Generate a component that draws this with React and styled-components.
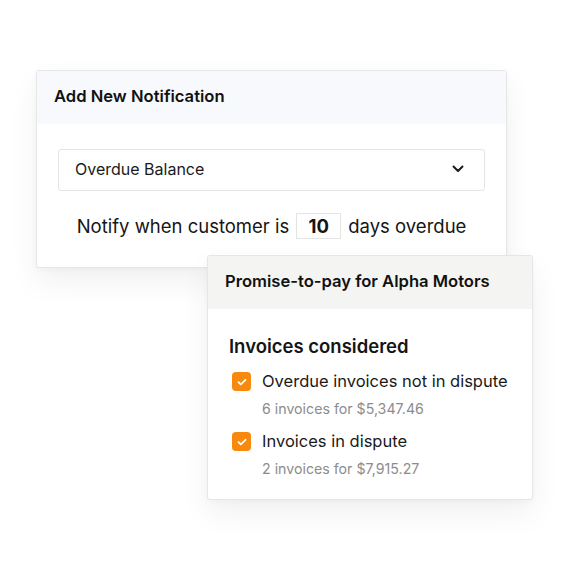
import React from "react";
import styled, { createGlobalStyle } from "styled-components";

const GlobalStyle = createGlobalStyle`
  body {
    margin: 0;
    background: #ffffff;
    font-family: "Inter", "Noto Sans", sans-serif;
    color: #111111;
  }
`;

const Stage = styled.main`
  width: 570px;
  height: 571px;
  padding-top: 70px;
  box-sizing: border-box;
  overflow: hidden;
`;

const Card = styled.section`
  position: relative;
  z-index: ${(p) => p.$z || 1};
  box-sizing: border-box;
  width: ${(p) => p.$width}px;
  height: ${(p) => p.$height}px;
  margin-left: ${(p) => p.$left}px;
  margin-top: ${(p) => p.$top || 0}px;
  background: #ffffff;
  border: 1px solid #e6e6e6;
  border-radius: 3px;
  box-shadow: 0 14px 30px rgba(0, 0, 0, 0.06), 0 2px 6px rgba(0, 0, 0, 0.03);
  overflow: hidden;
`;

const CardHeader = styled.header`
  height: ${(p) => p.$height}px;
  box-sizing: border-box;
  display: flex;
  align-items: center;
  padding: 0 0 3px ${(p) => p.$pad}px;
  background: ${(p) => p.$bg};
  font-size: 16.6px;
  font-weight: 600;
`;

const NotifyBody = styled.div`
  padding: 25px 21px 0;
  display: flex;
  flex-direction: column;
  align-items: stretch;
`;

const Select = styled.div`
  height: 42px;
  box-sizing: border-box;
  border: 1px solid #e4e4e4;
  border-radius: 3px;
  display: flex;
  align-items: center;
  justify-content: space-between;
  padding: 0 20px 2px 16px;
  font-size: 16px;
  color: #1a1a1a;
`;

const NotifyLine = styled.p`
  margin: 22px 0 0;
  display: flex;
  align-items: center;
  justify-content: center;
  gap: 7px;
  font-size: 18.5px;
  color: #151515;
`;

const DaysBox = styled.span`
  width: 45px;
  height: 26px;
  box-sizing: border-box;
  border: 1px solid #e4e4e4;
  display: inline-flex;
  align-items: center;
  justify-content: center;
  font-weight: 700;
`;

const PromiseBody = styled.div`
  padding: 24px 21px 0;
`;

const SectionTitle = styled.h2`
  margin: 0 0 10px;
  font-size: 18.5px;
  font-weight: 600;
  color: #151515;
  line-height: 26px;
`;

const Option = styled.div`
  display: grid;
  grid-template-columns: 19px 1fr;
  column-gap: 11px;
  row-gap: 6px;
  margin: 0 0 10px 3px;
`;

const Check = styled.span`
  width: 19px;
  height: 19px;
  margin-top: 3px;
  border-radius: 4px;
  background: #f7890f;
  display: flex;
  align-items: center;
  justify-content: center;
`;

const OptionLabel = styled.span`
  font-size: 16.5px;
  line-height: 24px;
  color: #1a1a1a;
`;

const OptionMeta = styled.span`
  grid-column: 2;
  font-size: 14.2px;
  line-height: 20px;
  color: #8c8c8c;
`;

const Chevron = () => (
  <svg width="12" height="8" viewBox="0 0 12 8" fill="none">
    <path d="M1.5 1.5 6 6l4.5-4.5" stroke="#1a1a1a" strokeWidth="2" strokeLinecap="round" strokeLinejoin="round" />
  </svg>
);

const Tick = () => (
  <svg width="10" height="8" viewBox="0 0 10 8" fill="none">
    <path d="M1.5 4.2 3.8 6.3 8.5 1.8" stroke="#ffffff" strokeWidth="1.8" strokeLinecap="round" strokeLinejoin="round" />
  </svg>
);

const invoices = [
  { label: "Overdue invoices not in dispute", meta: "6 invoices for $5,347.46" },
  { label: "Invoices in dispute", meta: "2 invoices for $7,915.27" },
];

export default function App() {
  return (
    <>
      <GlobalStyle />
      <Stage>
        <Card $width={471} $height={198} $left={36}>
          <CardHeader $height={53} $bg="#f8f9fc" $pad={17}>
            Add New Notification
          </CardHeader>
          <NotifyBody>
            <Select>
              Overdue Balance
              <Chevron />
            </Select>
            <NotifyLine>
              Notify when customer is <DaysBox>10</DaysBox> days overdue
            </NotifyLine>
          </NotifyBody>
        </Card>
        <Card $width={326} $height={245} $left={207} $top={-13} $z={2}>
          <CardHeader $height={53} $bg="#f4f4f3" $pad={17}>
            Promise-to-pay for Alpha Motors
          </CardHeader>
          <PromiseBody>
            <SectionTitle>Invoices considered</SectionTitle>
            {invoices.map((inv) => (
              <Option key={inv.label}>
                <Check>
                  <Tick />
                </Check>
                <OptionLabel>{inv.label}</OptionLabel>
                <OptionMeta>{inv.meta}</OptionMeta>
              </Option>
            ))}
          </PromiseBody>
        </Card>
      </Stage>
    </>
  );
}
